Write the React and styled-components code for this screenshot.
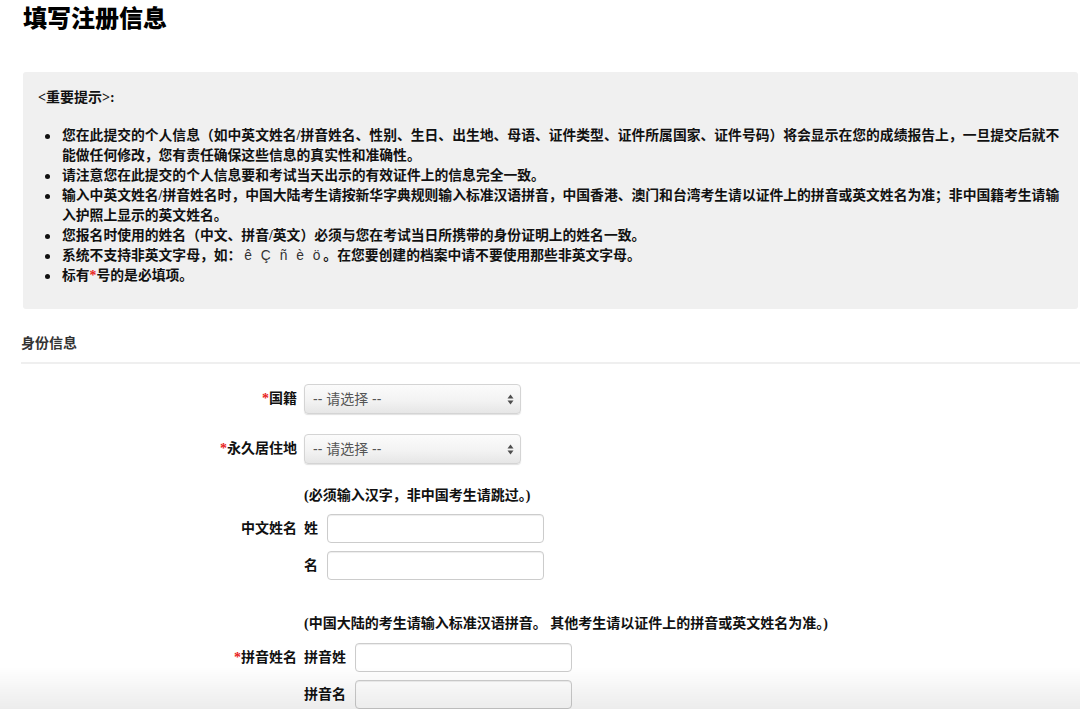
import React from "react";
import styled, { createGlobalStyle } from "styled-components";

const GlobalStyle = createGlobalStyle`
  html, body {
    margin: 0;
    padding: 0;
    background: #ffffff;
  }
  body {
    font-family: "Liberation Serif", "Noto Sans CJK SC", serif;
    color: #111;
  }
  * { box-sizing: border-box; }
`;

const Page = styled.div`
  padding: 0 2px 0 23px;
  min-height: 709px;
`;

const Title = styled.h1`
  margin: 5px 0 0;
  font-size: 24px;
  line-height: 28px;
  font-weight: 900;
  color: #000;
`;

const NoticeBox = styled.section`
  margin-top: 39px;
  background: #f0f0f0;
  border-radius: 3px;
  padding: 16px 10px 23px 15px;
`;

const NoticeHeading = styled.div`
  font-size: 14px;
  line-height: 20px;
  font-weight: 700;
  color: #111;
`;

const NoticeList = styled.ul`
  margin: 18px 0 0;
  padding-left: 24px;
  list-style: none;
`;

const NoticeItem = styled.li`
  position: relative;
  font-size: 13.8px;
  line-height: 20px;
  font-weight: 700;
  color: #111;

  &::before {
    content: "";
    position: absolute;
    left: -17px;
    top: 7.5px;
    width: 5px;
    height: 5px;
    border-radius: 50%;
    background: #111;
  }
`;

const Star = styled.span`
  color: #e8231b;
  font-weight: 700;
`;

const Sample = styled.span`
  font-family: "Liberation Sans", "Noto Sans", sans-serif;
  font-weight: 400;
  color: #333;
  word-spacing: 5px;
  margin: 0 3px;
`;

const SectionHeader = styled.h2`
  margin: 25px -2px 0 -2px;
  padding: 0 0 8px;
  border-bottom: 2px solid #efefef;
  font-size: 14px;
  line-height: 20px;
  font-weight: 700;
  color: #333;
`;

const Form = styled.div`
  display: flex;
  flex-direction: column;
`;

const FormRow = styled.div`
  display: grid;
  grid-template-columns: 274px auto;
  column-gap: 7px;
  align-items: center;
  margin-top: ${(p) => p.$gap}px;
`;

const FieldLabel = styled.div`
  text-align: right;
  font-size: 14px;
  line-height: 20px;
  font-weight: 700;
  color: #111;
`;

const Note = styled.div`
  font-size: 14px;
  line-height: 20px;
  font-weight: 700;
  color: #111;
`;

const SubField = styled.div`
  display: flex;
  align-items: center;
  gap: 9px;
`;

const SubLabel = styled.span`
  font-size: 14px;
  line-height: 20px;
  font-weight: 700;
  color: #111;
`;

const TextInput = styled.input`
  width: 217px;
  height: 29px;
  margin: 0;
  padding: 4px 6px;
  border: 1px solid #cccccc;
  border-radius: 4px;
  background: #ffffff;
  box-shadow: inset 0 1px 1px rgba(0, 0, 0, 0.075);
  font-size: 14px;
  outline: none;
`;

const SelectWrap = styled.div`
  position: relative;
  width: 217px;
  height: 30px;
`;

const SelectControl = styled.select`
  appearance: none;
  -webkit-appearance: none;
  width: 100%;
  height: 100%;
  margin: 0;
  padding: 0 24px 0 8px;
  border: 1px solid #d4d4d4;
  border-radius: 4px;
  background: linear-gradient(to bottom, #fbfbfb 0%, #f3f3f3 55%, #e6e6e6 100%);
  box-shadow: 0 1px 1px rgba(0, 0, 0, 0.12);
  font-family: "Liberation Sans", "Noto Sans CJK SC", sans-serif;
  font-size: 14px;
  color: #555;
  outline: none;
`;

const Arrows = styled.svg`
  position: absolute;
  right: 7px;
  top: 10px;
  pointer-events: none;
`;

const BottomShade = styled.div`
  position: fixed;
  left: 0;
  right: 0;
  bottom: 0;
  height: 42px;
  pointer-events: none;
  background: linear-gradient(to bottom, rgba(0, 0, 0, 0) 0%, rgba(0, 0, 0, 0.035) 45%, rgba(0, 0, 0, 0.075) 100%);
`;

function Select() {
  return (
    <SelectWrap>
      <SelectControl defaultValue="">
        <option value="">-- 请选择 --</option>
      </SelectControl>
      <Arrows width="7" height="11" viewBox="0 0 7 11">
        <path d="M3.5 0.5 L6.5 4.5 L0.5 4.5 Z" fill="#4d4d4d" />
        <path d="M3.5 10.5 L6.5 6.5 L0.5 6.5 Z" fill="#4d4d4d" />
      </Arrows>
    </SelectWrap>
  );
}

export default function App() {
  return (
    <>
      <GlobalStyle />
      <Page>
        <Title>填写注册信息</Title>
        <NoticeBox>
          <NoticeHeading>&lt;重要提示&gt;:</NoticeHeading>
          <NoticeList>
            <NoticeItem>
              您在此提交的个人信息（如中英文姓名/拼音姓名、性别、生日、出生地、母语、证件类型、证件所属国家、证件号码）将会显示在您的成绩报告上，一旦提交后就不能做任何修改，您有责任确保这些信息的真实性和准确性。
            </NoticeItem>
            <NoticeItem>请注意您在此提交的个人信息要和考试当天出示的有效证件上的信息完全一致。</NoticeItem>
            <NoticeItem>
              输入中英文姓名/拼音姓名时，中国大陆考生请按新华字典规则输入标准汉语拼音，中国香港、澳门和台湾考生请以证件上的拼音或英文姓名为准；非中国籍考生请输入护照上显示的英文姓名。
            </NoticeItem>
            <NoticeItem>
              您报名时使用的姓名（中文、拼音/英文）必须与您在考试当日所携带的身份证明上的姓名一致。
            </NoticeItem>
            <NoticeItem>
              系统不支持非英文字母，如：<Sample>ê Ç ñ è ö</Sample>。在您要创建的档案中请不要使用那些非英文字母。
            </NoticeItem>
            <NoticeItem>
              标有<Star>*</Star>号的是必填项。
            </NoticeItem>
          </NoticeList>
        </NoticeBox>

        <SectionHeader>身份信息</SectionHeader>

        <Form>
          <FormRow $gap={20}>
            <FieldLabel>
              <Star>*</Star>国籍
            </FieldLabel>
            <Select />
          </FormRow>
          <FormRow $gap={20}>
            <FieldLabel>
              <Star>*</Star>永久居住地
            </FieldLabel>
            <Select />
          </FormRow>

          <FormRow $gap={22}>
            <span />
            <Note>(必须输入汉字，非中国考生请跳过。)</Note>
          </FormRow>
          <FormRow $gap={8}>
            <FieldLabel>中文姓名</FieldLabel>
            <SubField>
              <SubLabel>姓</SubLabel>
              <TextInput type="text" />
            </SubField>
          </FormRow>
          <FormRow $gap={8}>
            <span />
            <SubField>
              <SubLabel>名</SubLabel>
              <TextInput type="text" />
            </SubField>
          </FormRow>

          <FormRow $gap={34}>
            <span />
            <Note>(中国大陆的考生请输入标准汉语拼音。 其他考生请以证件上的拼音或英文姓名为准。)</Note>
          </FormRow>
          <FormRow $gap={9}>
            <FieldLabel>
              <Star>*</Star>拼音姓名
            </FieldLabel>
            <SubField>
              <SubLabel>拼音姓</SubLabel>
              <TextInput type="text" />
            </SubField>
          </FormRow>
          <FormRow $gap={8}>
            <span />
            <SubField>
              <SubLabel>拼音名</SubLabel>
              <TextInput type="text" />
            </SubField>
          </FormRow>
        </Form>
      </Page>
      <BottomShade />
    </>
  );
}
